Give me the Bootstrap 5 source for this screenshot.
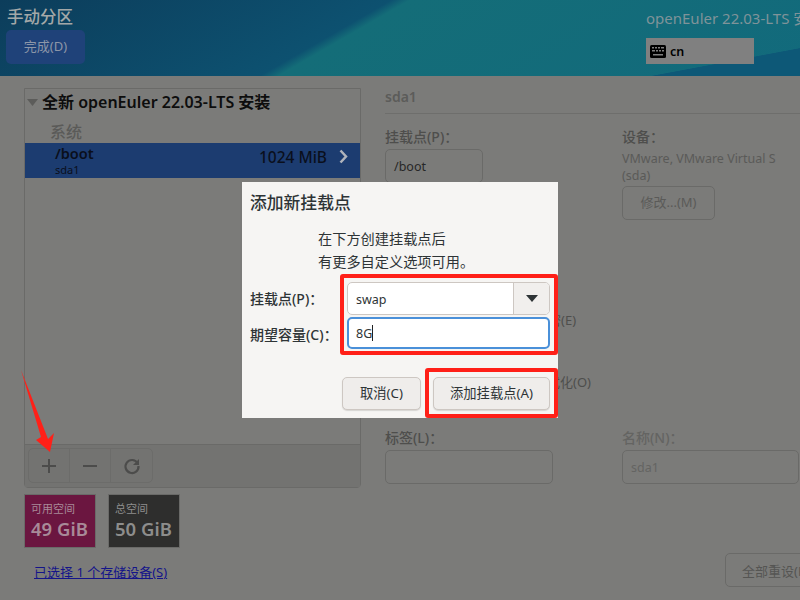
<!DOCTYPE html>
<html lang="zh">
<head>
    <meta charset="UTF-8">
    <title>手动分区</title>
    <link href="https://cdn.jsdelivr.net/npm/bootstrap@5.3.0/dist/css/bootstrap.min.css" rel="stylesheet">
    <style>
        html, body { width: 800px; height: 600px; overflow: hidden; }
        body { position: relative; background: #7b7b79; font-family: "Noto Sans", "Noto Sans CJK SC", sans-serif; font-size: 13px; color: #3c3c3b; line-height: 1.2; }
        .top-bar { height: 76px; padding: 0 46px 0 6px; color: #8f9a9c; background:
            linear-gradient(169.400deg, transparent 0 87.500%, #0d5877 87.800% 100%),
            linear-gradient(150deg, #0c3d5b 0, #0d5170 42%, #146d78 44%, #126a7c 100%); }
        .top-title { font-size: 16.500px; font-weight: 500; padding: 7px 0 0 1px; height: 30px; color: #a3a8a8; }
        .done-btn { width: 79px; height: 34px; background: #1f4279; border-radius: 5px; color: #8c96a8; font-size: 13px; }
        .top-right { width: 108px; }
        .os-name { font-size: 15px; padding-top: 9px; height: 38px; white-space: nowrap; color: #7f9399; }
        .kbd-box { height: 26px; width: 108px; background: #808080; color: #000; font-weight: 600; font-size: 12.500px; padding-left: 4px; }
        .main-area { height: 524px; }
        .left-col { width: 337px; flex-shrink: 0; margin-left: 24px; padding-top: 12px; }
        .tree-box { height: 400px; border: 1px solid #6a6a68; border-radius: 0 0 4px 4px; }
        .tree-head { font-size: 16px; font-weight: 600; color: #0d0d0d; height: 33px; padding: 4px 0 0 2px; }
        .tree-head svg { margin-top: 6px; }
        .tree-group { font-size: 16px; font-weight: 500; color: #5a5a58; padding: 1px 0 0 25px; height: 21px; }
        .boot-row { height: 35px; background: #1c3c70; color: #0a0f1c; padding: 0 12px 0 30px; }
        .boot-name { font-size: 14.500px; font-weight: 600; line-height: 19px; padding-top: 1px; height: 20px; }
        .boot-disk { font-size: 11px; line-height: 14px; }
        .boot-size { font-size: 15.500px; font-weight: 500; margin: 5px 12px 0 0; }
        .boot-chev { margin-top: 6px; }
        .tool-bar { height: 43px; border-top: 1px solid #6a6a68; background: #737371; padding: 3px 3px; }
        .tool-group { width: 125px; height: 35px; border: 1px solid #6c6c6a; border-radius: 5px; }
        .tool-item { width: 42px; border-right: 1px solid #6c6c6a; }
        .tool-item:last-child { border-right: 0; }
        .space-row { gap: 12px; margin-top: 6px; }
        .space-box { width: 72px; height: 54px; border: 1px solid #6a6a68; padding: 6px 6px; }
        .space-free { background: #6b1640; color: #a88a98; }
        .space-total { background: #2e2e2d; color: #8d8d8c; }
        .space-label { font-size: 11px; line-height: 16px; }
        .space-num { font-size: 18.500px; font-weight: 600; line-height: 23px; }
        .disk-link { color: #14148a; text-decoration: underline; font-size: 13px; margin: 17px 0 0 10px; display: inline-block; }
        .right-col { flex: 1; min-width: 0; padding: 13px 0 0 24px; }
        .pane-title { font-size: 14px; font-weight: 600; color: #5c5c5a; height: 25px; border-bottom: 1px solid #6e6e6c; margin-right: -30px; }
        .field-label { font-size: 14px; font-weight: 500; color: #4e4e4c; line-height: 18px; }
        .field-off { color: #646462; }
        .field-box { height: 34px; border: 1px solid #6a6a68; border-radius: 5px; padding: 1px 8px 0; margin-top: 3px; line-height: 32px; font-size: 12.500px; color: #272727; }
        .field-short { width: 98px; }
        .field-mid { width: 168px; }
        .field-long { width: 177px; }
        .field-box.field-off { color: #646462; }
        .dev-text { font-size: 12.500px; color: #5a5a58; line-height: 17px; margin-top: 4px; white-space: nowrap; }
        .dev-btn { width: 93px; height: 34px; border: 1px solid #6a6a68; border-radius: 5px; color: #5a5a58; font-size: 13px; margin-top: 2px; }
        .pane-cols { padding-top: 14px; }
        .pane-col-a { width: 237px; flex-shrink: 0; }
        .pane-col-b { width: 178px; flex-shrink: 0; }
        .pane-middle { height: 209px; padding-top: 91px; color: #4e4e4c; font-size: 13px; line-height: 18px; }
        .opt-encrypt { margin-left: 150px; }
        .opt-format { margin: 44px 0 0 123px; }
        .reset-btn { width: 100px; height: 34px; border: 1px solid #6a6a68; border-radius: 5px; color: #555553; margin: 69px 0 0 340px; padding: 1px 0 0 16px; line-height: 32px; white-space: nowrap; overflow: hidden; }
        .dlg { position: absolute; left: 242px; top: 182px; width: 316px; height: 236px; background: #f6f5f3; color: #2e3436; padding: 10px 8px 0; }
        .dlg-title { font-size: 16.800px; font-weight: 500; line-height: 22px; }
        .dlg-text { font-size: 14.200px; line-height: 23px; margin: 13px 0 0 68px; white-space: nowrap; }
        .dlg-form { display: grid; grid-template-columns: 97px 203px; grid-template-rows: 33px 32px; row-gap: 2px; margin-top: 9px; align-items: center; font-size: 14px; font-weight: 500; white-space: nowrap; }
        .dlg-label-a { padding-top: 2px; }
        .dlg-label-b { padding-top: 5px; }
        .combo { height: 33px; border: 1px solid #cdc7c2; border-radius: 5px; background: #fff; }
        .combo-val { padding-left: 8px; font-size: 12.500px; font-weight: 400; line-height: 33px; }
        .combo-arrow { width: 36px; border-left: 1px solid #cdc7c2; background: #f1efed; border-radius: 0 4px 4px 0; }
        .size-input { height: 32px; border: 2px solid #4a90d9; border-radius: 5px; background: #fff; padding: 1px 0 0 7px; font-size: 12.500px; font-weight: 400; line-height: 28px; }
        .caret-bar { display: inline-block; width: 1px; height: 16px; background: #222; vertical-align: -3px; }
        .dlg-actions { gap: 12px; margin: 28px 0 0 92px; }
        .dlg-btn { height: 33px; border: 1px solid #cdc7c2; border-radius: 5px; background: #efedeb; font-size: 13.300px; color: #2e3436; box-shadow: 0 1px 1px #d8d6d3; }
        .btn-cancel { width: 79px; }
        .btn-add { width: 117px; }
        .red-mark { position: absolute; border: 4px solid #ff2018; border-radius: 3px; }
        .red-a { left: 340px; top: 274px; width: 218px; height: 81px; }
        .red-b { left: 425px; top: 368px; width: 133px; height: 50px; }
        .arrow-mark { position: absolute; left: 18px; top: 368px; }
    </style>
</head>
<body>
    <header class="top-bar d-flex justify-content-between">
        <div>
            <div class="top-title">手动分区</div>
            <div class="done-btn d-flex align-items-center justify-content-center">完成(D)</div>
        </div>
        <div class="top-right">
            <div class="os-name">openEuler 22.03-LTS 安装</div>
            <div class="kbd-box d-flex align-items-center gap-1">
                <svg width="16" height="13" viewBox="0 0 16 13"><rect width="16" height="13" rx="1.500" fill="#000"/><path d="M2 2h2v1.500H2zM5 2h2v1.500H5zM8 2h2v1.500H8zM11 2h3v1.500h-3zM2 5h3v1.500H2zM6 5h2v1.500H6zM9 5h2v1.500H9zM12 5h2v1.500h-2zM3 9h10v1.500H3z" fill="#808080"/></svg>
                <span>cn</span>
            </div>
        </div>
    </header>
    <main class="main-area d-flex">
        <section class="left-col">
            <div class="tree-box d-flex flex-column">
                <div class="tree-head d-flex gap-1">
                    <svg width="11" height="7" viewBox="0 0 11 7"><path d="M0 0h11L5.500 7z" fill="#5c5c5a"/></svg>
                    <span>全新 openEuler 22.03-LTS 安装</span>
                </div>
                <div class="tree-group">系统</div>
                <div class="boot-row d-flex">
                    <div class="flex-grow-1">
                        <div class="boot-name">/boot</div>
                        <div class="boot-disk">sda1</div>
                    </div>
                    <div class="boot-size">1024 MiB</div>
                    <svg class="boot-chev" width="9" height="15" viewBox="0 0 9 15"><path d="M1.500 1.500L7 7.500L1.500 13.500" stroke="#b0b4bc" stroke-width="2.500" fill="none"/></svg>
                </div>
                <div class="flex-grow-1"></div>
                <div class="tool-bar">
                    <div class="tool-group d-flex">
                        <div class="tool-item d-flex align-items-center justify-content-center"><svg width="16" height="16" viewBox="0 0 16 16"><path d="M8 1v14M1 8h14" stroke="#4c4c4b" stroke-width="2" fill="none"/></svg></div>
                        <div class="tool-item d-flex align-items-center justify-content-center"><svg width="16" height="16" viewBox="0 0 16 16"><path d="M1 8h14" stroke="#4c4c4b" stroke-width="2" fill="none"/></svg></div>
                        <div class="tool-item d-flex align-items-center justify-content-center"><svg width="18" height="18" viewBox="0 0 18 18"><path d="M14.500 6A6.500 6.500 0 1 0 15.500 9" stroke="#4c4c4b" stroke-width="2.200" fill="none"/><path d="M16 2v6h-6z" fill="#4c4c4b"/></svg></div>
                    </div>
                </div>
            </div>
            <div class="d-flex space-row">
                <div class="space-box space-free"><div class="space-label">可用空间</div><div class="space-num">49 GiB</div></div>
                <div class="space-box space-total"><div class="space-label">总空间</div><div class="space-num">50 GiB</div></div>
            </div>
            <a class="disk-link" href="#">已选择 1 个存储设备(S)</a>
        </section>
        <section class="right-col">
            <div class="pane-title">sda1</div>
            <div class="d-flex pane-cols">
                <div class="pane-col-a">
                    <div class="field-label">挂载点(P)：</div>
                    <div class="field-box field-short">/boot</div>
                </div>
                <div class="pane-col-b">
                    <div class="field-label">设备：</div>
                    <div class="dev-text">VMware, VMware Virtual S<br>(sda)</div>
                    <div class="dev-btn d-flex align-items-center justify-content-center">修改...(M)</div>
                </div>
            </div>
            <div class="pane-middle">
                <div class="opt-encrypt">加密(E)</div>
                <div class="opt-format">重新格式化(O)</div>
            </div>
            <div class="d-flex">
                <div class="pane-col-a">
                    <div class="field-label">标签(L)：</div>
                    <div class="field-box field-mid"></div>
                </div>
                <div class="pane-col-b">
                    <div class="field-label field-off">名称(N)：</div>
                    <div class="field-box field-long field-off">sda1</div>
                </div>
            </div>
            <div class="reset-btn">全部重设(R)</div>
        </section>
    </main>

    <div class="dlg">
        <div class="dlg-title">添加新挂载点</div>
        <div class="dlg-text">在下方创建挂载点后<br>有更多自定义选项可用。</div>
        <div class="dlg-form">
            <div class="dlg-label-a">挂载点(P)：</div>
            <div class="combo d-flex justify-content-between">
                <span class="combo-val">swap</span>
                <span class="combo-arrow d-flex align-items-center justify-content-center"><svg width="12" height="7" viewBox="0 0 12 7"><path d="M0 0h12L6 7z" fill="#2e3436"/></svg></span>
            </div>
            <div class="dlg-label-b">期望容量(C)：</div>
            <div class="size-input">8G<span class="caret-bar"></span></div>
        </div>
        <div class="dlg-actions d-flex">
            <div class="dlg-btn btn-cancel d-flex align-items-center justify-content-center">取消(C)</div>
            <div class="dlg-btn btn-add d-flex align-items-center justify-content-center">添加挂载点(A)</div>
        </div>
    </div>

    <div class="red-mark red-a"></div>
    <div class="red-mark red-b"></div>
    <svg class="arrow-mark" width="40" height="86" viewBox="0 0 40 86"><path d="M3 2L30 71L36 65L32 84L18 72L23 69z" fill="#ff2018"/></svg>
</body>
</html>
